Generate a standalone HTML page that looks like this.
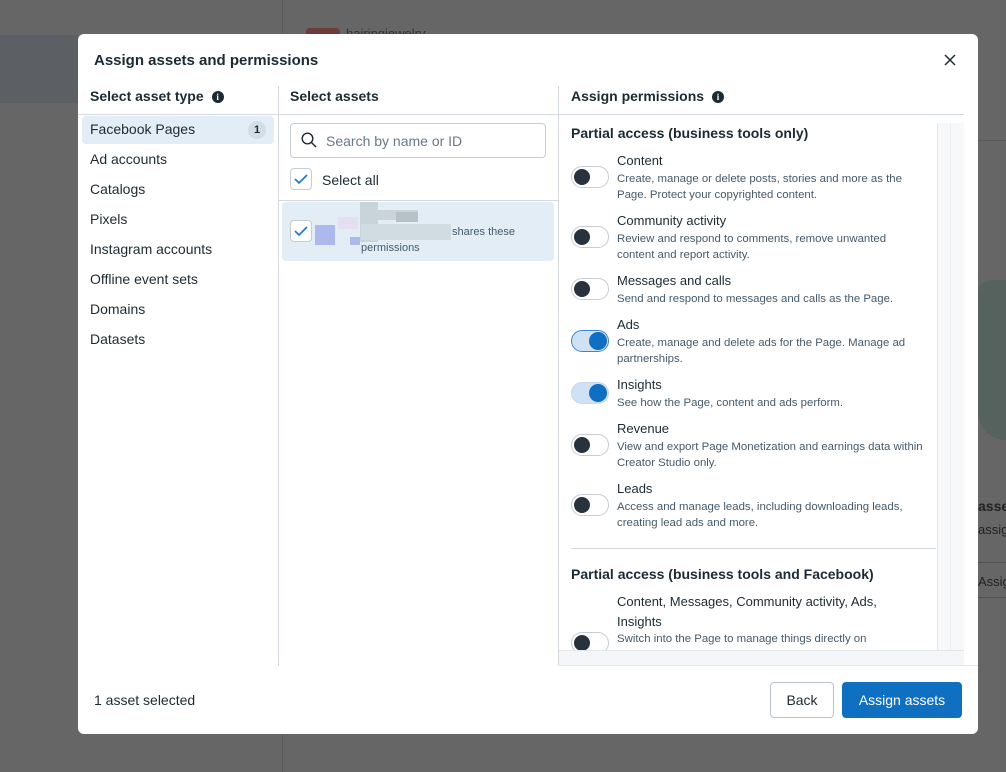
<!DOCTYPE html>
<html><head><meta charset="utf-8"><style>
*{box-sizing:border-box;margin:0;padding:0}
body{width:1006px;height:772px;overflow:hidden;background:#666;font-family:"Liberation Sans",sans-serif;color:#1c2b33;position:relative}
.abs{position:absolute}
.modal{left:78px;top:34px;width:900px;height:700px;background:#fff;border-radius:6px;overflow:hidden}
.t{font-size:15px;font-weight:bold}
.h{font-size:14px;font-weight:bold}
.item{font-size:14px;left:12px}
.tg{width:38px;height:22px;border-radius:11px;border:1px solid #c6ccd3;background:#fff;left:12px}
.tg i{position:absolute;left:2px;top:2px;width:16px;height:16px;border-radius:50%;background:#27323d}
.tg.on{background:#cfe1f5;border-color:#c6d7ea}
.tg.on i{left:auto;right:1px;top:1px;width:18px;height:18px;background:#0f6fc0}
.pt{left:58px;font-size:13px}
.pd{left:58px;font-size:11.4px;color:#465a69;line-height:16px;width:308px}
.info{display:inline-block;width:12px;height:12px;border-radius:50%;background:#1c2b33;color:#fff;font-size:9px;text-align:center;line-height:12px;font-weight:bold;vertical-align:1px;margin-left:8px;font-family:"Liberation Serif",serif}
.cb{width:22px;height:22px;border:1px solid #c6ccd3;border-radius:4px;background:#fff}
</style></head><body>
<div class="abs" style="left:0;top:35px;width:78px;height:68px;background:#5c5f64"></div>
<div class="abs" style="left:282px;top:0;width:1px;height:772px;background:#5a5a5a"></div>
<div class="abs" style="left:978px;top:140px;width:28px;height:1px;background:#5a5a5a"></div>
<div class="abs" style="left:978px;top:280px;width:28px;height:160px;background:#55625e;border-radius:20px 0 0 40px"></div>
<div class="abs" style="left:978px;top:498px;font-size:14px;font-weight:bold;color:#222">asse</div>
<div class="abs" style="left:978px;top:522px;font-size:13px;color:#222">assig</div>
<div class="abs" style="left:978px;top:562px;width:28px;height:36px;border-top:1px solid #555;border-bottom:1px solid #555;font-size:13px;color:#222;padding-top:11px">Assig</div>
<div class="abs" style="left:306px;top:28px;width:34px;height:8px;background:#6e3a3a;border-radius:4px 4px 0 0"></div>
<div class="abs" style="left:346px;top:26px;font-size:13px;color:#333">hairingjewelry</div>

<div class="abs modal">
 <div class="abs t" style="left:16px;top:18px">Assign assets and permissions</div>
 <svg class="abs" style="left:866px;top:20px" width="12" height="12"><path d="M1 1L11 11M11 1L1 11" stroke="#1c2b33" stroke-width="1.5"/></svg>
 <div class="abs" style="left:200px;top:52px;width:1px;height:580px;background:#d4d9df"></div>
 <div class="abs" style="left:480px;top:52px;width:1px;height:580px;background:#d4d9df"></div>
 <div class="abs" style="left:0;top:80px;width:886px;height:1px;background:#d4d9df"></div>
 <div class="abs h" style="left:12px;top:54px">Select asset type<span class="info">i</span></div>
 <div class="abs h" style="left:212px;top:54px">Select assets</div>
 <div class="abs h" style="left:493px;top:54px">Assign permissions<span class="info">i</span></div>
 <div class="abs" style="left:4px;top:82px;width:192px;height:28px;background:#e3edf6;border-radius:4px"></div>
 <div class="abs" style="left:170px;top:87px;width:18px;height:18px;border-radius:50%;background:#d3dde6;font-size:11px;font-weight:bold;text-align:center;line-height:18px">1</div>
 <div class="abs item" style="top:87px">Facebook Pages</div>
 <div class="abs item" style="top:117px">Ad accounts</div>
 <div class="abs item" style="top:147px">Catalogs</div>
 <div class="abs item" style="top:177px">Pixels</div>
 <div class="abs item" style="top:207px">Instagram accounts</div>
 <div class="abs item" style="top:237px">Offline event sets</div>
 <div class="abs item" style="top:267px">Domains</div>
 <div class="abs item" style="top:297px">Datasets</div>
 <div class="abs" style="left:212px;top:89px;width:256px;height:35px;border:1px solid #c6ccd3;border-radius:4px"></div>
 <svg class="abs" style="left:223px;top:98px" width="16" height="16"><circle cx="6.5" cy="6.5" r="5.3" fill="none" stroke="#1c2b33" stroke-width="1.4"/><path d="M10.5 10.5L15 15" stroke="#1c2b33" stroke-width="1.4"/></svg>
 <div class="abs" style="left:248px;top:99px;font-size:14px;color:#67788a">Search by name or ID</div>
 <div class="abs cb" style="left:212px;top:134px"></div>
 <svg class="abs" style="left:216px;top:139px" width="14" height="12"><path d="M1 6L5 10L13 2" stroke="#1877c8" stroke-width="1.6" fill="none"/></svg>
 <div class="abs" style="left:244px;top:138px;font-size:14px">Select all</div>
 <div class="abs" style="left:201px;top:166px;width:279px;height:1px;background:#d4d9df"></div>
 <div class="abs" style="left:204px;top:168px;width:272px;height:59px;background:#e2edf6;border-radius:4px"></div>
 <div class="abs cb" style="left:212px;top:186px"></div>
 <svg class="abs" style="left:216px;top:191px" width="14" height="12"><path d="M1 6L5 10L13 2" stroke="#1877c8" stroke-width="1.6" fill="none"/></svg>
 <div class="abs" style="left:237px;top:191px;width:20px;height:20px;background:#adb9ec"></div>
 <div class="abs" style="left:282px;top:168px;width:18px;height:40px;background:#c8d3da"></div>
 <div class="abs" style="left:300px;top:176px;width:40px;height:10px;background:#cbd4da"></div>
 <div class="abs" style="left:318px;top:178px;width:22px;height:10px;background:#b6c1c8"></div>
 <div class="abs" style="left:283px;top:190px;width:90px;height:16px;background:#d0dbe2"></div>
 <div class="abs" style="left:272px;top:203px;width:10px;height:8px;background:#adb9ec"></div>
 <div class="abs" style="left:260px;top:183px;width:20px;height:12px;background:#e6dff1"></div>
 <div class="abs" style="left:374px;top:192px;font-size:11px;color:#465a69">shares these</div>
 <div class="abs" style="left:283px;top:208px;font-size:11px;color:#465a69">permissions</div>
 <div class="abs" style="left:481px;top:81px;width:405px;height:550px;overflow:hidden">
  <div class="abs" style="left:378px;top:8px;width:27px;height:530px;background:#f7f8f9;border-left:1px solid #e4e7ea"></div>
  <div class="abs" style="left:391px;top:8px;width:1px;height:530px;background:#eceef0"></div>
  <div class="abs h" style="left:12px;top:10px">Partial access (business tools only)</div>

  <div class="abs tg" style="top:51px"><i></i></div>
  <div class="abs pt" style="top:38px">Content</div>
  <div class="abs pd" style="top:56px">Create, manage or delete posts, stories and more as the Page. Protect your copyrighted content.</div>

  <div class="abs tg" style="top:111px"><i></i></div>
  <div class="abs pt" style="top:98px">Community activity</div>
  <div class="abs pd" style="top:116px">Review and respond to comments, remove unwanted content and report activity.</div>

  <div class="abs tg" style="top:163px"><i></i></div>
  <div class="abs pt" style="top:158px">Messages and calls</div>
  <div class="abs pd" style="top:176px">Send and respond to messages and calls as the Page.</div>

  <div class="abs tg on" style="top:215px;border:1px solid #3c86cf"><i></i></div>
  <div class="abs pt" style="top:202px">Ads</div>
  <div class="abs pd" style="top:220px">Create, manage and delete ads for the Page. Manage ad partnerships.</div>

  <div class="abs tg on" style="top:267px"><i></i></div>
  <div class="abs pt" style="top:262px">Insights</div>
  <div class="abs pd" style="top:280px">See how the Page, content and ads perform.</div>

  <div class="abs tg" style="top:319px"><i></i></div>
  <div class="abs pt" style="top:306px">Revenue</div>
  <div class="abs pd" style="top:324px">View and export Page Monetization and earnings data within Creator Studio only.</div>

  <div class="abs tg" style="top:379px"><i></i></div>
  <div class="abs pt" style="top:366px">Leads</div>
  <div class="abs pd" style="top:384px">Access and manage leads, including downloading leads, creating lead ads and more.</div>

  <div class="abs" style="left:12px;top:433px;width:365px;height:1px;background:#d4d9df"></div>
  <div class="abs h" style="left:12px;top:451px">Partial access (business tools and Facebook)</div>
  <div class="abs pt" style="top:477px;line-height:20px;width:300px">Content, Messages, Community activity, Ads, Insights</div>
  <div class="abs pd" style="top:516px">Switch into the Page to manage things directly on</div>
  <div class="abs tg" style="top:517px"><i></i></div>
  <div class="abs" style="left:0;top:535px;width:405px;height:20px;background:#f5f6f7;border-top:1px solid #e4e7ea"></div>
 </div>
 <div class="abs" style="left:480px;top:631px;width:420px;height:1px;background:#e4e7ea"></div>
 <div class="abs" style="left:16px;top:658px;font-size:14px">1 asset selected</div>
 <div class="abs" style="left:692px;top:648px;width:64px;height:36px;border:1px solid #b8c2cc;border-radius:4px;font-size:14px;text-align:center;line-height:34px">Back</div>
 <div class="abs" style="left:764px;top:648px;width:120px;height:36px;background:#0f6fc0;border-radius:4px;font-size:14px;color:#fff;text-align:center;line-height:36px">Assign assets</div>
</div>
</body></html>
